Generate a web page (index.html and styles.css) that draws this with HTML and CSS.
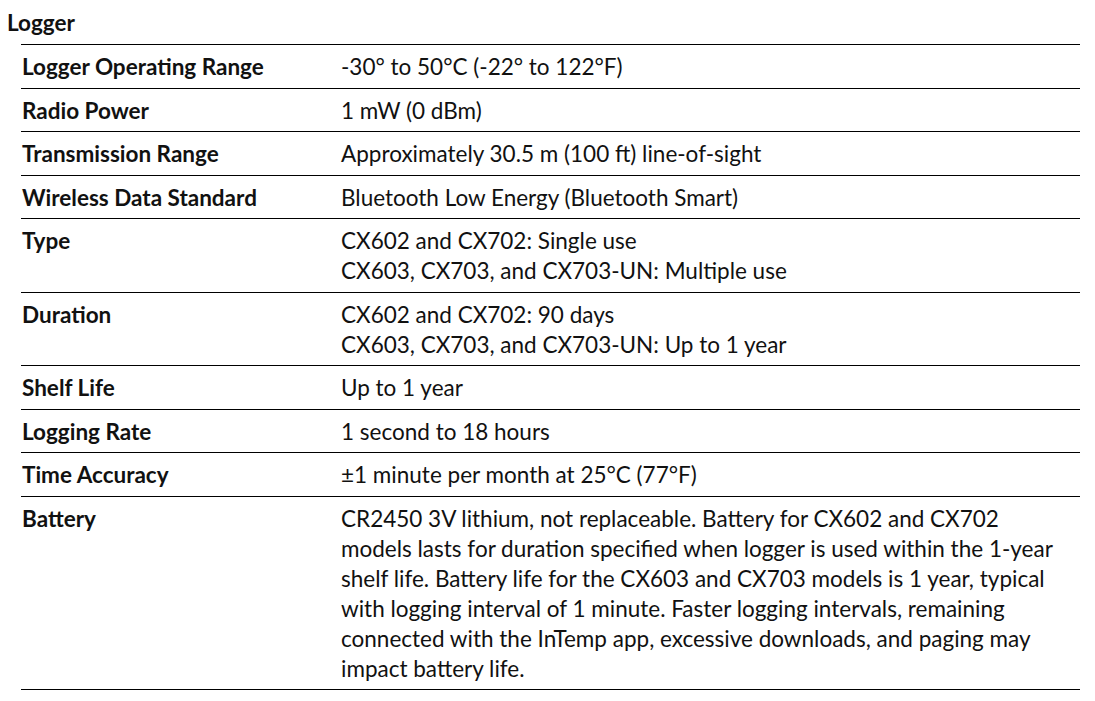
FILE: index.html
```html
<!DOCTYPE html>
<html>
<head>
<meta charset="utf-8">
<link rel="stylesheet" href="styles.css">
</head>
<body>
<div class="page">
  <div class="section-title">Logger</div>
  <table class="spec">
    <tr><th>Logger Operating Range</th><td>-30° to 50°C (-22° to 122°F)</td></tr>
    <tr><th>Radio Power</th><td>1 mW (0 dBm)</td></tr>
    <tr><th>Transmission Range</th><td>Approximately 30.5 m (100 ft) line-of-sight</td></tr>
    <tr><th>Wireless Data Standard</th><td>Bluetooth Low Energy (Bluetooth Smart)</td></tr>
    <tr><th>Type</th><td>CX602 and CX702: Single use<br>CX603, CX703, and CX703-UN: Multiple use</td></tr>
    <tr><th>Duration</th><td>CX602 and CX702: 90 days<br>CX603, CX703, and CX703-UN: Up to 1 year</td></tr>
    <tr><th>Shelf Life</th><td>Up to 1 year</td></tr>
    <tr><th>Logging Rate</th><td>1 second to 18 hours</td></tr>
    <tr><th>Time Accuracy</th><td>±1 minute per month at 25°C (77°F)</td></tr>
    <tr><th>Battery</th><td class="long">CR2450 3V lithium, not replaceable. Battery for CX602 and CX702<br>models lasts for duration specified when logger is used within the 1-year<br>shelf life. Battery life for the CX603 and CX703 models is 1 year, typical<br>with logging interval of 1 minute. Faster logging intervals, remaining<br>connected with the InTemp app, excessive downloads, and paging may<br>impact battery life.</td></tr>
  </table>
</div>
</body>
</html>
```
FILE: styles.css
```css
html, body {
  margin: 0;
  padding: 0;
  background: #fff;
}
body {
  font-family: "Lato", "Open Sans", sans-serif;
  font-size: 22.5px;
  color: #111;
}
.page {
  width: 1095px;
  height: 701px;
  box-sizing: border-box;
  padding: 8px 0 0 7px;
}
.section-title {
  font-weight: bold;
  line-height: 30px;
  height: 36px;
}
.spec {
  margin-left: 14px;
  width: 1059px;
  border-collapse: collapse;
}
.spec tr {
  border-top: 1px solid #000;
  border-bottom: 1px solid #000;
}
.spec th, .spec td {
  text-align: left;
  vertical-align: top;
  padding: 7px 0 5.5px 0;
  line-height: 30px;
  white-space: nowrap;
}
.spec th {
  width: 319px;
  padding-left: 1px;
  font-weight: bold;
}
```
